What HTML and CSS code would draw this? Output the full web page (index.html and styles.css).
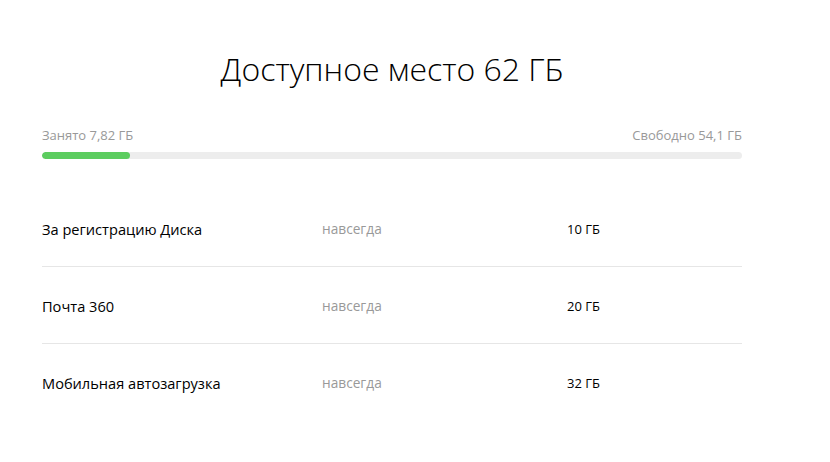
FILE: index.html
```html
<!DOCTYPE html>
<html lang="ru">
<head>
  <meta charset="UTF-8" />
  <title>Доступное место</title>
  <link rel="stylesheet" href="styles.css">
</head>
<body>
  <div class="space">
    <h1>Доступное место 62 ГБ</h1>

    <div class="usage">
      <div class="usage-labels">
        <span>Занято 7,82 ГБ</span>
        <span>Свободно 54,1 ГБ</span>
      </div>
      <div class="bar">
        <div class="bar-fill" style="width: 12.6%"></div>
      </div>
    </div>

    <ul class="rows">
      <li class="row">
        <span class="row-name">За регистрацию Диска</span>
        <span class="row-term">навсегда</span>
        <span class="row-size">10 ГБ</span>
      </li>
      <li class="row">
        <span class="row-name">Почта 360</span>
        <span class="row-term">навсегда</span>
        <span class="row-size">20 ГБ</span>
      </li>
      <li class="row">
        <span class="row-name">Мобильная автозагрузка</span>
        <span class="row-term">навсегда</span>
        <span class="row-size">32 ГБ</span>
      </li>
    </ul>
  </div>
</body>
</html>
```

FILE: styles.css
```css
:root {
  --text: #000;
  --muted: #999;
  --line: #e6e6e6;
  --bar-bg: #ededed;
  --bar-fill: #5ccd5f;
  --font: "Open Sans", "Noto Sans", sans-serif;
}

body {
  margin: 0;
  background: #fff;
  color: var(--text);
  font-family: var(--font);
}

.space {
  width: 700px;
  margin-left: 42px;
}

h1 {
  margin: 49px 0 0;
  font-size: 32px;
  font-weight: 300;
  line-height: 40px;
  text-align: center;
}

.usage {
  margin-top: 38px;
}

.usage-labels {
  display: flex;
  justify-content: space-between;
  font-size: 13px;
  line-height: 16px;
  color: var(--muted);
}

.bar {
  margin-top: 9px;
  height: 7px;
  border-radius: 4px;
  background: var(--bar-bg);
  overflow: hidden;
}

.bar-fill {
  height: 100%;
  border-radius: 4px;
  background: var(--bar-fill);
}

.rows {
  list-style: none;
  margin: 31px 0 0;
  padding: 0;
}

.row {
  display: flex;
  padding: 29px 0 27px;
  line-height: 20px;
  border-bottom: 1px solid var(--line);
}

.row:last-child {
  border-bottom: none;
}

.row-name {
  width: 280px;
  font-size: 14.6px;
}

.row-term {
  width: 245px;
  font-size: 13.7px;
  color: var(--muted);
}

.row-size {
  font-size: 13px;
}
```
